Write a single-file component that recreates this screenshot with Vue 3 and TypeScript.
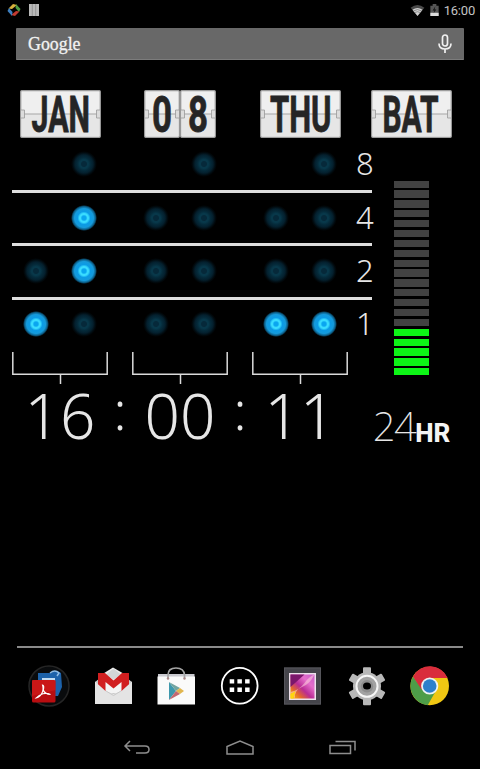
<template>
  <div class="screen">
    <header class="status-bar">
      <div class="status-group">
        <svg class="pinwheel" viewBox="0 0 14 14">
          <path d="M1.500 5.500L6 1l4 1-5 4z" fill="#d8b13c" />
          <path d="M9 1l4.500 5-1.500 3-3.500-4z" fill="#4f9c43" />
          <path d="M12.500 8.500L8 13l-4-1 5-4z" fill="#c23a30" />
          <path d="M5 13L.5 8 2 5l3.500 4z" fill="#3d7fc0" />
        </svg>
        <svg class="bars-icon" viewBox="0 0 10 12">
          <path d="M0 0h10v12H0z" fill="#b9b9b9" />
          <path d="M3.300 0v12M6.700 0v12" stroke="#858585" stroke-width=".7" />
        </svg>
      </div>
      <div class="status-group right">
        <svg class="wifi" viewBox="0 0 16 12">
          <path d="M.5 3Q8-3 15.500 3L8 12z" fill="#4a4a4a" />
          <path d="M2.500 5.300Q8 1 13.500 5.300L8 12z" fill="#d0d0d0" />
          <path d="M3.500 6.500Q8 3.500 12.500 6.500M5 8.300Q8 6.300 11 8.300" fill="none" stroke="#555" stroke-width=".6" />
        </svg>
        <svg class="battery-icon" viewBox="0 0 9 13">
          <path d="M0 2h2.500V0h4v2H9v11H0z" fill="#555" />
          <path d="M0 9.500h9V13H0z" fill="#ddd" />
          <path d="M5.500 2.500L2.500 7h2L3.500 10 6.500 6h-2z" fill="#111" />
        </svg>
        <span class="clock">16:00</span>
      </div>
    </header>

    <div class="search-bar">
      <svg class="google" viewBox="0 0 56 30">
        <text x="0" y="20.500" textLength="52.500" lengthAdjust="spacingAndGlyphs">Google</text>
      </svg>
      <svg class="mic" viewBox="0 0 14 20">
        <rect x="4.500" y="1" width="5" height="11" rx="2.500" />
        <path d="M1 9.500Q1 15 7 15T13 9.500M7 15v4" />
      </svg>
    </div>

    <main class="widget">
      <section class="binary">
        <div class="cards">
          <div v-for="(group, i) in dateCards" :key="i" class="card-group">
            <svg
              v-for="card in group"
              :key="card.text"
              class="card"
              :class="{ small: card.width < 50 }"
              :viewBox="`0 0 ${card.width} 48`"
            >
              <FlipFace :width="card.width" />
              <text :x="card.x" y="42" :textLength="card.length" lengthAdjust="spacingAndGlyphs">{{ card.text }}</text>
            </svg>
          </div>
        </div>

        <div v-for="row in rows" :key="row.value" class="led-row">
          <div v-for="(pair, g) in row.leds" :key="g" class="led-group">
            <span v-for="(state, n) in pair" :key="n" class="cell">
              <i v-if="state !== null" class="led" :class="{ on: state }"></i>
            </span>
          </div>
          <span class="weight">{{ row.value }}</span>
        </div>

        <div class="brackets">
          <svg v-for="n in 3" :key="n" viewBox="0 0 96 33">
            <path d="M.8 0v22.200h94.400V0M48.500 22v10" />
          </svg>
        </div>

        <div class="time">
          <span class="digits">16</span>
          <span class="colon">:</span>
          <span class="digits">00</span>
          <span class="colon">:</span>
          <span class="digits">11</span>
        </div>
      </section>

      <section class="battery">
        <svg class="card" viewBox="0 0 81 48">
          <FlipFace :width="81" />
          <text x="11.500" y="42" textLength="56" lengthAdjust="spacingAndGlyphs">BAT</text>
        </svg>
        <div class="meter">
          <i v-for="n in 20" :key="n" :class="{ full: n > 20 - batteryLevel }"></i>
        </div>
        <div class="mode"><span>24</span><b>HR</b></div>
      </section>
    </main>

    <footer class="dock">
      <svg viewBox="0 0 42 42">
        <circle cx="21" cy="21" r="20" fill="#090b0d" stroke="#252525" stroke-width="1.500" />
        <path d="M10 8h13q5-4 10 0l1 14-4 9H10z" fill="#1d62aa" />
        <path d="M14 13h13v16H14z" fill="#c4ddf2" />
        <path d="M18 16h7v12h-7z" fill="#3975ae" />
        <path d="M22 8q5-4 9 0l-2 3" fill="none" stroke="#8fbce4" stroke-width="1.500" />
        <rect x="4" y="15" width="23.500" height="22.500" rx="1.500" fill="#b90d10" />
        <path d="M4 15h23.500v10L4 31z" fill="#d9201d" opacity=".55" />
        <path d="M14.500 20q2 0 .8 5 1.200 4 7.200 4.500-3.500-1.800-7.500-.8T8 33q3.500-.5 5.700-4.500 2.300-4 .8-8.500z" fill="none" stroke="#fff" stroke-width="1.100" />
      </svg>
      <svg viewBox="0 0 42 42">
        <path d="M3 17L21 3l19 14v21H3z" fill="#c9c9c9" />
        <path d="M9 10L21 2.500 34 10v17H9z" fill="#eee" />
        <path d="M14 9.500l7.500-6 7.500 6-7.500 5z" fill="#d3d7d8" />
        <path d="M6 8h7l8.500 7.500L30 8h7v16l-6 4H12l-6-4z" fill="#d11f20" />
        <path d="M13.500 17v11h16V17l-8 6.500z" fill="#f4f4f4" />
        <path d="M3 16.500l10.500 9.500 8 3 8-3L40 16.500V39H3z" fill="#e4e4e4" />
        <path d="M14 26l7.500 4.500L29 26" fill="none" stroke="#c8c8c8" />
      </svg>
      <svg viewBox="0 0 42 42">
        <path d="M3 9h36.500v3H3z" fill="#c9c9cf" />
        <path d="M2.500 11.500H40v28H2.500z" fill="#fafafa" />
        <path d="M13 13V10Q13 3 21 3T29.500 10v3" fill="none" stroke="#a5a5a5" stroke-width="1.700" />
        <circle cx="13" cy="13.500" r="1.200" fill="#a88" />
        <circle cx="29.500" cy="13.500" r="1.200" fill="#a88" />
        <path d="M14 17v18l7-9z" fill="#3e98ad" />
        <path d="M14 17l11 6-4 3z" fill="#72a4a0" />
        <path d="M25 23l4 3-4 3-4-3z" fill="#e1b64f" />
        <path d="M14 35l11-6-4-3z" fill="#c4686f" />
      </svg>
      <svg viewBox="0 0 42 42">
        <circle cx="20.700" cy="20.700" r="17.900" fill="#000" stroke="#fff" stroke-width="1.800" />
        <path :d="drawerDots" fill="#fff" />
      </svg>
      <svg viewBox="0 0 42 42">
        <defs>
          <linearGradient id="photo" x1="0" y1="1" x2="1" y2="0">
            <stop offset="0" stop-color="#ffc400" />
            <stop offset=".25" stop-color="#e3662e" />
            <stop offset=".45" stop-color="#b92c94" />
            <stop offset=".7" stop-color="#e56ecb" />
            <stop offset="1" stop-color="#c65bc8" />
          </linearGradient>
        </defs>
        <rect x="2" y="2.500" width="37" height="37" fill="#45454b" />
        <rect x="2.500" y="3" width="36" height="36" fill="none" stroke="#55555b" />
        <rect x="7" y="8" width="27" height="27" fill="#eee1ec" />
        <rect x="8.500" y="9.500" width="24" height="24" fill="url(#photo)" />
        <path d="M8.500 9.500h14L8.500 22z" fill="#7b176b" />
        <path d="M8.500 27q9-2 14-9t10-8.500Q28 19 20 22t-7 11.500z" fill="#ffd2dc" opacity=".55" />
        <path d="M8.500 29l5-3-2 7.500h-3z" fill="#ffd50e" />
      </svg>
      <svg viewBox="0 0 42 42">
        <g fill="#b8b8b8">
          <rect v-for="n in 3" :key="n" x="17" y="2.300" width="8" height="38" rx="1" :transform="`rotate(${n * 60} 21 21.300)`" />
          <circle cx="21" cy="21.300" r="14" />
        </g>
        <circle cx="21" cy="21.300" r="10.500" fill="#a2a2a2" stroke="#f7f7f7" stroke-width="2" />
        <circle cx="21" cy="21.300" r="6.200" fill="#8d8d8d" />
        <ellipse cx="21" cy="21" rx="4" ry="3.500" fill="#000" />
      </svg>
      <svg viewBox="0 0 42 42">
        <circle cx="20.700" cy="21" r="19.300" fill="#f0c713" />
        <path d="M4 11.400A19.300 19.300 0 0 1 38.700 13H20.700l-7 11z" fill="#d92c3c" />
        <path d="M4 11.400A19.300 19.300 0 0 0 18.700 40.200L27.200 25.200 14.200 25.200z" fill="#4d9d48" />
        <path d="M4 11.400L12.700 24.700l8-9z" fill="#d92c3c" />
        <circle cx="20.700" cy="21" r="8.600" fill="#eef3f3" />
        <circle cx="20.700" cy="21" r="6.800" fill="#2e7fcb" />
      </svg>
    </footer>

    <nav class="nav-bar">
      <svg viewBox="0 0 30 18"><path d="M7 2L2 7l5 5M2 7h20q4 0 4 3.500T22 14H13" /></svg>
      <svg viewBox="0 0 30 18"><path d="M2 15V7.500L15 2l13 5.500V15z" /></svg>
      <svg viewBox="0 0 30 18"><path d="M3 6.500h20.500v8H3zM8.500 2.500H28v9" /></svg>
    </nav>
  </div>
</template>

<script setup lang="ts">
import { h, ref } from 'vue'
import type { FunctionalComponent } from 'vue'

interface Card {
  text: string
  width: number
  x: number
  length: number
}

interface LedRow {
  value: number
  // null means the digit never needs this bit
  leds: Array<Array<boolean | null>>
}

const batteryLevel = ref(5)

const dateCards: Card[][] = [
  [{ text: 'JAN', width: 81, x: 11.5, length: 58.5 }],
  [
    { text: '0', width: 36, x: 8, length: 20 },
    { text: '8', width: 36, x: 8, length: 20 }
  ],
  [{ text: 'THU', width: 81, x: 10, length: 61.5 }]
]

const rows: LedRow[] = [
  { value: 8, leds: [[null, false], [null, false], [null, false]] },
  { value: 4, leds: [[null, true], [false, false], [false, false]] },
  { value: 2, leds: [[false, true], [false, false], [false, false]] },
  { value: 1, leds: [[true, false], [false, false], [true, true]] }
]

const drawerDots = [10.7, 18.4, 26.1]
  .flatMap(x => [14.3, 22.6].map(y => `M${x} ${y}h4.500v4.300h-4.500z`))
  .join('')

// background of a flip card: plate, fold line and hinges
const FlipFace: FunctionalComponent<{ width: number }> = ({ width }) =>
  h('g', [
    h('rect', { x: 0.7, y: 0.7, width: width - 1.4, height: 46.6, rx: 1, fill: '#efefef', stroke: '#9c9c9c', 'stroke-width': 1.3 }),
    h('rect', { x: 1.5, y: 24, width: width - 3, height: 22, fill: '#e6e6e6' }),
    h('path', { d: `M1 24H${width - 1}`, stroke: '#a5a5a5', 'stroke-width': 1 }),
    h('path', { d: `M1 20h3.500v8H1M${width - 1} 20h-3.500v8h3.500`, fill: '#dcdcdc', stroke: '#999', 'stroke-width': 0.8 })
  ])
FlipFace.props = ['width']
</script>

<style>
body {
  background: #000;
}
</style>

<style scoped>
.screen {
  display: flex;
  flex-direction: column;
  width: 480px;
  height: 769px;
  overflow: hidden;
  background: #000;
  color: #e6e6e6;
  font-family: "Noto Sans", sans-serif;
}

.screen svg {
  display: block;
  flex: none;
  overflow: visible;
}

.status-bar {
  display: flex;
  justify-content: space-between;
  height: 28px;
  padding: 0 5px 0 7px;
}

.status-group {
  display: flex;
  align-items: center;
  height: 20px;
  gap: 8px;
}

.status-group.right {
  gap: 5px;
}

.pinwheel {
  width: 14px;
  height: 14px;
}

.bars-icon {
  width: 10px;
  height: 12px;
}

.wifi {
  width: 15px;
  height: 11px;
}

.battery-icon {
  width: 9px;
  height: 12px;
}

.clock {
  font: 13px/20px Roboto, sans-serif;
  color: #c4c4c4;
  padding-top: 1px;
  letter-spacing: -0.2px;
}

.search-bar {
  display: flex;
  flex: none;
  align-items: center;
  justify-content: space-between;
  height: 32px;
  margin: 0 16px;
  padding: 0 12px;
  box-sizing: border-box;
  background: #686868;
  border-bottom: 1px solid #7c7c7c;
  border-radius: 1px;
}

.google {
  width: 56px;
  height: 30px;
  fill: #f2f2f2;
  font: 19px "Liberation Serif", serif;
  stroke: #f2f2f2;
  stroke-width: 0.3;
}

.mic {
  width: 14px;
  height: 20px;
  fill: none;
  stroke: #f0f0f0;
  stroke-width: 1.7;
}

.widget {
  display: flex;
  height: 586px;
  padding: 30px 0 0 12px;
  box-sizing: border-box;
}

.binary {
  width: 359px;
}

.cards {
  display: flex;
  gap: 24px;
  height: 48px;
}

.card-group {
  display: flex;
  justify-content: center;
  width: 96px;
}

.card {
  width: 81px;
  height: 48px;
}

.card text {
  fill: #252525;
  stroke: #252525;
  stroke-width: 0.8;
  font: 700 50px Roboto, sans-serif;
}

.card.small {
  width: 36px;
}

.led-row {
  display: flex;
  align-items: center;
  gap: 24px;
  width: 360px;
  height: 53.3px;
  box-sizing: border-box;
  border-bottom: 3px solid #dedede;
}

.cards + .led-row {
  height: 55px;
}

.led-row:nth-child(5) {
  height: 52.3px;
  border-bottom-color: transparent;
}

.led-group {
  display: flex;
  width: 96px;
}

.cell {
  display: flex;
  justify-content: center;
  width: 48px;
}

.led {
  width: 26px;
  height: 26px;
  margin-bottom: 1px;
  border-radius: 50%;
  background: radial-gradient(circle, #06293a 0 2.5px, #08384a 3.5px 4.5px, #052b3b 6.5px, #04202e 9px, #01090d 11.5px, transparent 13px);
}

.led.on {
  background: radial-gradient(circle, #0aa6f0 0 2px, #3adcff 3.5px 4.5px, #0b9be6 6.5px, #159adb 9.5px, #0c5d86 11.5px, transparent 13px);
}

.weight {
  width: 20px;
  margin-left: -16px;
  padding-bottom: 1px;
  font-size: 31px;
  font-weight: 300;
  line-height: 47px;
  white-space: nowrap;
}

.brackets {
  display: flex;
  gap: 24px;
}

.brackets svg {
  width: 96px;
  height: 33px;
  fill: none;
  stroke: #dadada;
  stroke-width: 1.5;
}

.time {
  display: flex;
  height: 66px;
}

.digits {
  width: 96px;
  text-align: center;
  font-size: 62px;
  font-weight: 300;
  line-height: 61px;
}

.colon {
  width: 24px;
  text-align: center;
  font-size: 53px;
  font-weight: 300;
  line-height: 50px;
}

.battery {
  display: flex;
  flex-direction: column;
  align-items: center;
  width: 81px;
}

.meter {
  display: flex;
  flex-direction: column;
  gap: 2.55px;
  width: 34.5px;
  height: 195px;
  margin-top: 42.5px;
}

.meter i {
  flex: 1;
  background: #424242;
}

.meter i.full {
  background: #0df516;
}

.mode {
  display: flex;
  align-items: baseline;
  margin-top: 23.5px;
  line-height: 54px;
  white-space: nowrap;
}

.mode span {
  font-size: 40px;
  font-weight: 250;
  letter-spacing: -1.6px;
}

.mode b {
  position: relative;
  top: 1px;
  font-family: Roboto, sans-serif;
  font-size: 26px;
  font-weight: 800;
  color: #f4f4f4;
}

.dock {
  display: flex;
  justify-content: space-between;
  height: 76px;
  flex: none;
  margin: 0 17px;
  padding: 16.5px 11.5px 0 11px;
  box-sizing: border-box;
  border-top: 2px solid #8a8a8a;
}

.dock svg {
  width: 42px;
  height: 42px;
}

.nav-bar {
  display: flex;
  justify-content: center;
  gap: 72px;
  padding-top: 17px;
}

.nav-bar svg {
  width: 30px;
  height: 18px;
  fill: none;
  stroke: #8e8e8e;
  stroke-width: 1.5;
}
</style>
